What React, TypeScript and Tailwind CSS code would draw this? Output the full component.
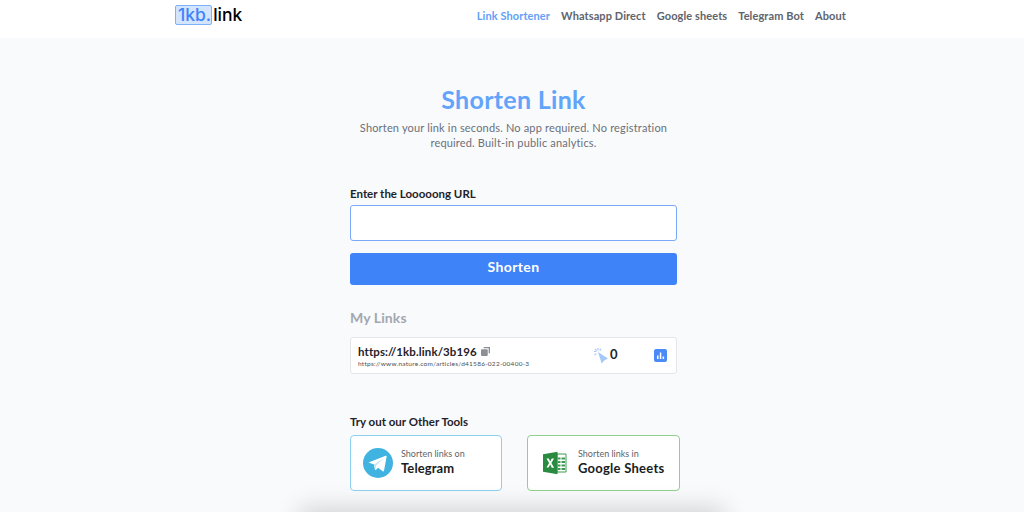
const navItems = ['Link Shortener', 'Whatsapp Direct', 'Google sheets', 'Telegram Bot', 'About']

const TelegramIcon = () => (
  <svg viewBox="0 0 30 30" className="w-[30px] h-[30px] shrink-0">
    <circle cx="15" cy="15" r="15" fill="#40b3e0" />
    <path d="M5.500 14.600 22.600 7.700c.6-.2 1.200.2 1 1l-2.600 14c-.1.6-.8.9-1.300.5l-4.600-3.400-2.300 2.200c-.3.3-.7.1-.8-.2l-1-5.200z" fill="#fff" />
    <path d="M11 16.600 20.600 10.400 13 17.800l-.9 4.200z" fill="#c8e4f2" />
  </svg>
)

const SheetsIcon = () => (
  <svg viewBox="0 0 24 24" className="w-6 h-6 shrink-0">
    <path d="M14 3h9v18h-9z" fill="#fff" stroke="#3c9a55" strokeWidth="1" />
    <path d="M15 6.500h2.500v2H15zm3.500 0H22v2h-3.500zM15 10h2.500v2H15zm3.500 0H22v2h-3.500zM15 13.500h2.500v2H15zm3.500 0H22v2h-3.500zM15 17h2.500v2H15zm3.500 0H22v2h-3.500z" fill="#3c9a55" />
    <path d="M0 3.200 14.500 .8v22.400L0 20.800z" fill="#2a8a40" />
    <path d="m3.500 7.500 2.300.1 1.400 3 1.600-3.100 2.200-.1-2.600 4.600 2.700 4.800-2.300-.1-1.600-3.200-1.600 3.100-2.100-.1 2.600-4.600z" fill="#fff" />
  </svg>
)

const App = () => {
  return (
    <div className="relative h-[512px] overflow-hidden bg-[#f9fafc] font-['Lato','Noto_Sans',sans-serif] text-[#1f2229]">
      <header className="h-[38px] bg-white flex items-center justify-between pl-[175px] pr-[178px]">
        <div className="flex items-center font-['Inter',sans-serif] font-medium text-[17.500px] leading-[20px] -mt-[9px]">
          <span className="bg-[#d3e4fd] border border-[#7fb0fa] rounded-[2px] h-5 pl-[2px] pr-0 leading-[18px] text-[#3f83f8]">1kb.</span>
          <span className="text-black ml-[1px]">link</span>
        </div>
        <nav className="flex gap-[11px] -mt-[6px] text-[11px] font-bold tracking-[0.1px]">
          {navItems.map((item, i) => (
            <span key={item} className={i === 0 ? 'text-[#63a0f8]' : 'text-[#60646c]'}>
              {item}
            </span>
          ))}
        </nav>
      </header>

      <main className="w-[327px] ml-[350px]">
        <h1 className="mt-[45px] text-center text-[25px] leading-[32px] font-bold tracking-[0.3px] text-[#63a4fb]">Shorten Link</h1>
        <p className="mt-[5px] -mx-4 px-5 text-center text-[11px] leading-[15px] tracking-[0.17px] text-[#6b7078]">
          Shorten your link in seconds. No app required. No registration required. Built-in public analytics.
        </p>

        <label className="block mt-[36px] text-[11.500px] leading-[15px] font-bold">Enter the Looooong URL</label>
        <div className="mt-[4px] h-[36px] bg-white border border-[#7aa9f7] rounded-[3px]" />
        <button className="mt-[12px] w-full h-[32px] bg-[#3f83f8] rounded-[3px] text-white text-[14px] font-bold tracking-[0.4px] pb-[5px]">
          Shorten
        </button>

        <h2 className="mt-[24px] text-[14px] leading-[18px] font-bold tracking-[0.1px] text-[#a3a8b0]">My Links</h2>

        <div className="mt-[10px] h-[37px] bg-white border border-[#e4e6ea] rounded-[3px] flex items-center pl-[7px] pr-[9px]">
          <div className="w-[235px] mt-[1px]">
            <div className="flex items-center gap-[4px] text-[11.500px] leading-[15px] font-bold tracking-[0.1px] text-[#1f2229]">
              https://1kb.link/3b196
              <svg viewBox="0 0 10 10" className="w-[9px] h-[9px]">
                <path d="M3 0h7v7H8.500V1.500H3z" fill="#8c8f94" />
                <rect x="0" y="2.500" width="7.500" height="7.500" rx="1" fill="#8c8f94" />
              </svg>
            </div>
            <div className="text-[6.500px] leading-[8px] mt-[1px] tracking-[0.25px] text-[#4b4f55]">https://www.nature.com/articles/d41586-022-00400-3</div>
          </div>
          <svg viewBox="0 0 15 16" className="w-[15px] h-[16px]">
            <path d="M5 4 15 10.500 11.500 12.300 8.700 15.500z" fill="#a5c8fa" />
            <path d="M5 0v2.500M1 3.500h2.500M2 1l1.600 1.600M1.500 7l1.800-1.400M8 .8 6.800 2.500" stroke="#a5c8fa" strokeWidth="1.200" fill="none" />
          </svg>
          <span className="ml-[2px] text-[13px] leading-[15px] font-bold -mt-[2px]">0</span>
          <span className="ml-auto w-[13px] h-[13px] rounded-[2px] bg-[#4a8bf8] flex items-center justify-center">
            <svg viewBox="0 0 13 13" className="w-[13px] h-[13px]">
              <path d="M3 6.500h1.500V10H3zM5.800 3.500h1.500V10H5.800zM8.600 7.500h1.500V10H8.600z" fill="#fff" />
            </svg>
          </span>
        </div>

        <h3 className="mt-[40px] text-[11.500px] leading-[15px] font-bold">Try out our Other Tools</h3>
        <div className="mt-[6px] flex justify-between w-[330px]">
          <div className="w-[152px] h-[56px] bg-white border border-[#8dd0ee] rounded-[4px] flex items-center pl-[12px] gap-[8px]">
            <TelegramIcon />
            <div className="-mt-[3px]">
              <div className="text-[9px] leading-[12px] text-[#5f6368]">Shorten links on</div>
              <div className="text-[13px] leading-[16px] font-bold tracking-[0.1px] text-[#1a1c20]">Telegram</div>
            </div>
          </div>
          <div className="w-[153px] h-[56px] bg-white border border-[#8fd08f] rounded-[4px] flex items-center pl-[15px] gap-[11px]">
            <SheetsIcon />
            <div className="-mt-[2px]">
              <div className="text-[9px] leading-[12px] text-[#5f6368]">Shorten links in</div>
              <div className="text-[13px] leading-[16px] font-bold tracking-[0.25px] text-[#1a1c20]">Google Sheets</div>
            </div>
          </div>
        </div>
      </main>

      {/* shadow of the card sitting just below the fold */}
      <div className="absolute left-[310px] top-[518px] w-[404px] h-[40px] shadow-[0_0_24px_10px_rgba(0,0,0,0.16)]" />
    </div>
  )
}

export default App
